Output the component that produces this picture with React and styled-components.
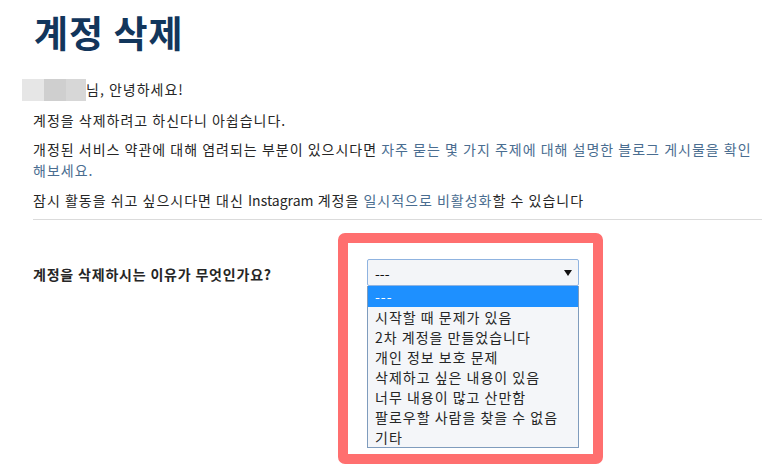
import React from 'react'
import styled, { createGlobalStyle } from 'styled-components';

const reasons = [
	'---',
	'시작할 때 문제가 있음',
	'2차 계정을 만들었습니다',
	'개인 정보 보호 문제',
	'삭제하고 싶은 내용이 있음',
	'너무 내용이 많고 산만함',
	'팔로우할 사람을 찾을 수 없음',
	'기타',
];

const App = () => {
	return (
		<>
			<GlobalStyle />
			<Page>
				<Title>계정 삭제</Title>
				<Paragraph>
					<BlurredName />님, 안녕하세요!
				</Paragraph>
				<Paragraph>계정을 삭제하려고 하신다니 아쉽습니다.</Paragraph>
				<Paragraph>
					개정된 서비스 약관에 대해 염려되는 부분이 있으시다면{' '}
					<Link href="#">자주 묻는 몇 가지 주제에 대해 설명한 블로그 게시물을 확인해보세요.</Link>
				</Paragraph>
				<Paragraph>
					잠시 활동을 쉬고 싶으시다면 대신 <Latin>Instagram</Latin> 계정을{' '}
					<Link href="#">일시적으로 비활성화</Link>할 수 있습니다
				</Paragraph>
				<Divider />
				<QuestionRow>
					<QuestionLabel>계정을 삭제하시는 이유가 무엇인가요?</QuestionLabel>
					<Highlight>
						<SelectBox>
							<span>---</span>
							<svg width="8" height="6" viewBox="0 0 8 6">
								<polygon points="0,0 8,0 4,6" fill="#111" />
							</svg>
						</SelectBox>
						<OptionList>
							{reasons.map((reason, index) => (
								<Option key={index} selected={index === 0}>
									{reason}
								</Option>
							))}
						</OptionList>
					</Highlight>
				</QuestionRow>
			</Page>
		</>
	);
}

export default App


const GlobalStyle = createGlobalStyle`
	body {
		margin: 0;
		background: #fff;
		font-family: "Noto Sans CJK KR", "Noto Sans", sans-serif;
		color: #262626;
	}
`;

const Page = styled.div`
	width: 779px;
	height: 469px;
	box-sizing: border-box;
	padding: 10px 17px 0 33px;
	overflow: hidden;
`;

const Title = styled.h1`
	margin: 0 0 25px 1px;
	font-size: 37px;
	line-height: 44px;
	font-weight: 700;
	color: #12365c;
	letter-spacing: 1px;
`;

const Paragraph = styled.p`
	margin: 0 0 8.5px;
	font-size: 14px;
	line-height: 21px;
	letter-spacing: 1px;
`;

const Latin = styled.span`
	letter-spacing: 0;
`;

const BlurredName = styled.span`
	display: inline-block;
	vertical-align: middle;
	width: 64px;
	height: 22px;
	margin: -2px 0 0 -11px;
	background: linear-gradient(
		to right,
		#e6e6e6 0 22px,
		#cfcfcf 22px 44px,
		#d7d7d7 44px 64px
	);
`;

const Link = styled.a`
	color: #4a6d90;
	text-decoration: none;
`;

const Divider = styled.hr`
	margin: 7px 0 13px;
	border: 0;
	border-top: 1px solid #dbdbdb;
`;

const QuestionRow = styled.div`
	display: flex;
	align-items: flex-start;
`;

const QuestionLabel = styled.label`
	width: 305px;
	margin-top: 31px;
	font-size: 14px;
	line-height: 20px;
	font-weight: 700;
	letter-spacing: 0.8px;
	color: #262626;
`;

const Highlight = styled.div`
	width: 265px;
	box-sizing: border-box;
	border: 10px solid #ff6f6f;
	border-radius: 7px;
	padding: 16px 14px 6px 19px;
	background: #fff;
`;

const SelectBox = styled.div`
	height: 27px;
	box-sizing: border-box;
	display: flex;
	align-items: center;
	justify-content: space-between;
	padding: 0 6px 0 7px;
	border: 1px solid #8fb3e0;
	border-radius: 2px;
	background: #f3f5f8;
	font-size: 14px;
	color: #111;
`;

const OptionList = styled.ul`
	margin: 0;
	padding: 0;
	list-style: none;
	border: 1px solid #7f9cbd;
	border-top: 0;
	background: #f4f6f9;
`;

const Option = styled.li`
	height: ${({ selected }) => (selected ? '21px' : '20px')};
	padding: 0 7px;
	font-size: 14px;
	line-height: ${({ selected }) => (selected ? '21px' : '20px')};
	letter-spacing: 1px;
	color: ${({ selected }) => (selected ? '#fff' : '#262626')};
	background: ${({ selected }) => (selected ? '#1e90ff' : 'transparent')};
	white-space: nowrap;
`;
